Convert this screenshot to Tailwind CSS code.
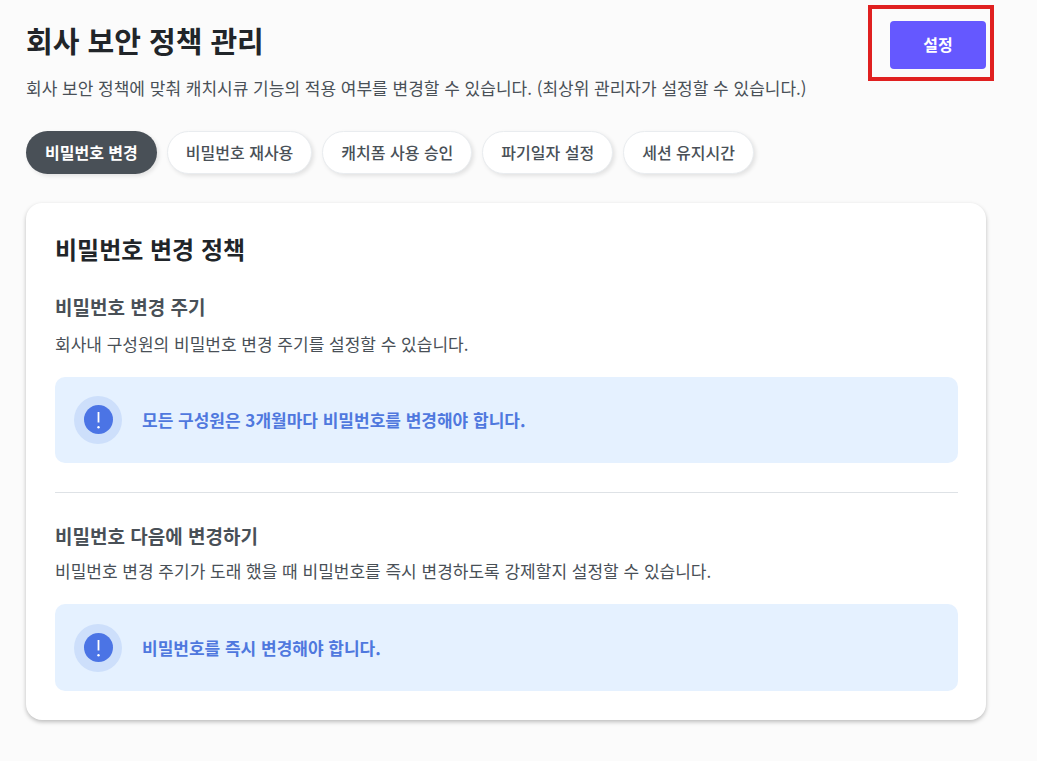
<!DOCTYPE html>
<html lang="ko">
<head>
<meta charset="utf-8">
<meta name="viewport" content="width=device-width, initial-scale=1">
<title>회사 보안 정책 관리</title>
<script src="https://cdn.jsdelivr.net/npm/@tailwindcss/browser@4"></script>
</head>
<body class="min-h-screen bg-[#fbfbfb] font-['Noto_Sans_CJK_KR',sans-serif] text-[17px] text-[#495057]">
<main class="pt-5 pr-[51px] pb-10 pl-[26px]">
  <header class="flex items-start justify-between">
    <div>
      <h1 class="text-[29px] leading-10 font-bold text-[#212529]">회사 보안 정책 관리</h1>
      <p class="mt-4 leading-6">회사 보안 정책에 맞춰 캐치시큐 기능의 적용 여부를 변경할 수 있습니다. (최상위 관리자가 설정할 수 있습니다.)</p>
    </div>
    <div class="relative mt-px shrink-0">
      <button type="button" class="block h-12 w-24 rounded-[4px] bg-[#6558ff] pb-0.5 text-base font-bold text-white">설정</button>
      <span class="pointer-events-none absolute -top-4 -right-2 -bottom-3 -left-[22px] border-4 border-[#e02020]"></span>
    </div>
  </header>
  <nav class="mt-[31px] flex gap-[10px] text-base font-medium">
    <button type="button" class="h-[43px] rounded-full bg-[#495057] px-[19px] pb-0.5 font-bold text-white shadow-[2px_2px_4px_rgba(0,0,0,0.1)]">비밀번호 변경</button>
    <button type="button" class="h-[43px] rounded-full border border-[#e9ecef] bg-white px-[18px] pb-0.5 shadow-[2px_2px_4px_rgba(0,0,0,0.1)]">비밀번호 재사용</button>
    <button type="button" class="h-[43px] rounded-full border border-[#e9ecef] bg-white px-[18px] pb-0.5 shadow-[2px_2px_4px_rgba(0,0,0,0.1)]">캐치폼 사용 승인</button>
    <button type="button" class="h-[43px] rounded-full border border-[#e9ecef] bg-white px-[18px] pb-0.5 shadow-[2px_2px_4px_rgba(0,0,0,0.1)]">파기일자 설정</button>
    <button type="button" class="h-[43px] rounded-full border border-[#e9ecef] bg-white px-[18px] pb-0.5 shadow-[2px_2px_4px_rgba(0,0,0,0.1)]">세션 유지시간</button>
  </nav>
  <section class="mt-[29px] rounded-2xl bg-white pt-7 pr-7 pb-[29px] pl-[29px] shadow-[0_2px_4px_rgba(0,0,0,0.25)]">
    <h2 class="text-2xl leading-9 font-bold text-[#212529]">비밀번호 변경 정책</h2>
    <section class="mt-[26px]">
      <h3 class="text-[19px] leading-7 font-bold">비밀번호 변경 주기</h3>
      <p class="mt-[11px] leading-6">회사내 구성원의 비밀번호 변경 주기를 설정할 수 있습니다.</p>
      <div class="mt-[21px] flex h-[86px] items-center gap-5 rounded-[10px] bg-[#e5f1ff] px-[19px]">
        <svg class="size-12" viewBox="0 0 48 48" aria-hidden="true"><circle cx="24" cy="24" r="24" fill="#cddffb"/><circle cx="24.5" cy="23.5" r="14.5" fill="#4b74e5"/><path d="M24.5 16v10.5" stroke="#fff" stroke-width="1.8"/><circle cx="24.5" cy="31.3" r="1.2" fill="#fff"/></svg>
        <strong class="font-bold text-[#4f78de]">모든 구성원은 3개월마다 비밀번호를 변경해야 합니다.</strong>
      </div>
    </section>
    <hr class="my-[29px] border-[#dee2e6]">
    <section>
      <h3 class="text-[19px] leading-7 font-bold">비밀번호 다음에 변경하기</h3>
      <p class="mt-[9px] leading-6">비밀번호 변경 주기가 도래 했을 때 비밀번호를 즉시 변경하도록 강제할지 설정할 수 있습니다.</p>
      <div class="mt-[21px] flex h-[87px] items-center gap-5 rounded-[10px] bg-[#e5f1ff] px-[19px]">
        <svg class="size-12" viewBox="0 0 48 48" aria-hidden="true"><circle cx="24" cy="24" r="24" fill="#cddffb"/><circle cx="24.5" cy="23.5" r="14.5" fill="#4b74e5"/><path d="M24.5 16v10.5" stroke="#fff" stroke-width="1.8"/><circle cx="24.5" cy="31.3" r="1.2" fill="#fff"/></svg>
        <strong class="font-bold text-[#4f78de]">비밀번호를 즉시 변경해야 합니다.</strong>
      </div>
    </section>
  </section>
</main>
</body>
</html>
